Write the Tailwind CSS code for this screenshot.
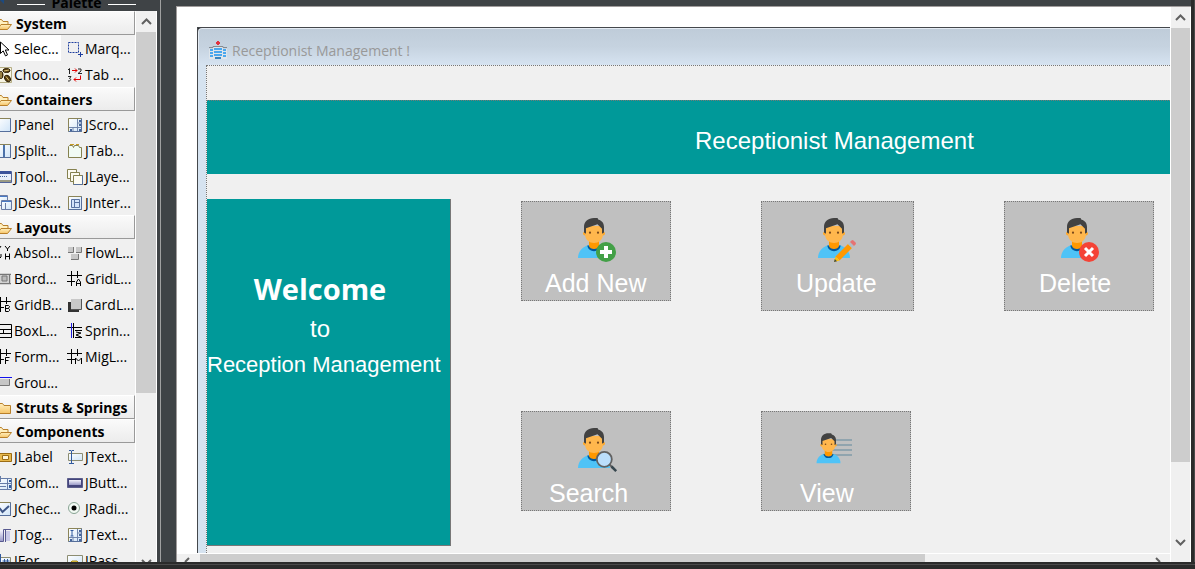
<!DOCTYPE html>
<html lang="en">
<head>
<meta charset="utf-8">
<title>Receptionist Management</title>
<script src="https://cdn.jsdelivr.net/npm/@tailwindcss/browser@4"></script>
</head>
<body class="h-screen flex flex-col overflow-hidden bg-[#2b2b2b] font-['Open_Sans',sans-serif] text-sm text-black">

<svg class="absolute h-0 w-0" aria-hidden="true">
  <defs>
    <linearGradient id="pane" x1="0" y1="0" x2="1" y2="1"><stop offset="0" stop-color="#fff"/><stop offset="1" stop-color="#cfe4f8"/></linearGradient>
    <linearGradient id="gold" x1="0" y1="0" x2="0" y2="1"><stop offset="0" stop-color="#fff0c0"/><stop offset="1" stop-color="#f6c467"/></linearGradient>
    <linearGradient id="steel" x1="0" y1="0" x2="0" y2="1"><stop offset="0" stop-color="#f4f4fc"/><stop offset="1" stop-color="#9a9ac8"/></linearGradient>
    <symbol id="open" viewBox="0 0 16 16"><path d="M1.500 13.500V3.500h4l1.500 2h5v3" fill="#fff0c0" stroke="#b9802a"/><path d="M1.500 13.500l3.500-5h10.500l-4 5z" fill="url(#gold)" stroke="#b9802a"/></symbol>
    <symbol id="closed" viewBox="0 0 16 16"><path d="M1.500 13.500v-10h5l1.500 2h6.500v8z" fill="url(#gold)" stroke="#b9802a"/></symbol>
    <symbol id="cursor" viewBox="0 0 16 16"><path d="M4.500 1v11.500l2.700-2.600 2.300 5 2-1-2.200-4.900h3.700z" fill="#fff" stroke="#000"/></symbol>
    <symbol id="marquee" viewBox="0 0 16 16"><path d="M1.500 1.500h10v10h-10z" fill="none" stroke="#1f3f9f" stroke-dasharray="2 1"/><path d="M13.500 11v5M11 13.500h5" stroke="#1f3f9f"/></symbol>
    <symbol id="beans" viewBox="0 0 16 16"><path d="M.500.500h15v15H.500z" fill="#f7f4e2" stroke="#b5ad85"/><g fill="#5c4210" stroke="#2c1d05"><ellipse cx="10.500" cy="3.500" rx="3.500" ry="2"/><ellipse cx="5" cy="8" rx="2" ry="3.500"/><ellipse cx="11.500" cy="11.500" rx="2.500" ry="3.500" transform="rotate(-35 11.500 11.500)"/></g><path d="M8 4l5-1M5 5v6M10 9.500l3 4" stroke="#d8bf77"/></symbol>
    <symbol id="order" viewBox="0 0 16 16"><path d="M1 3l1.500-1.500V7M11 2h3v2l-3 2.500h4M1 9.500h3l-1.500 2c2 0 1.500 3-1.500 2.500" fill="none" stroke="#222"/><path d="M5 3.500h5M8 1.500l2 2-2 2M13.500 8.500v4H7M9 10.500l-2 2 2 2" fill="none" stroke="#e00000"/></symbol>
    <symbol id="panel" viewBox="0 0 16 16"><path d="M1.500 1.500h13v13h-13z" fill="url(#pane)" stroke="#8b8458"/><path d="M1.500 14.500h13v-13" fill="none" stroke="#566f9b"/></symbol>
    <symbol id="scroll" viewBox="0 0 16 16"><use href="#panel"/><path d="M10.500 2v12M2 10.500h12M10.500 6h4M6 10v4" stroke="#7186ad"/><path d="M12 3h2v2h-2zM12 12h2v2h-2zM3 12h2v2H3zM12 7h2v2h-2z" fill="#45659b"/></symbol>
    <symbol id="split" viewBox="0 0 16 16"><use href="#panel"/><path d="M8 2v12" stroke="#4a71aa" stroke-width="2"/></symbol>
    <symbol id="tabs" viewBox="0 0 16 16"><path d="M1.500 14.500v-11l1-1h3l1 2 1-2h4l1 2h2v10z" fill="#f1fbf4" stroke="#85814f"/><path d="M3 1.500h4M9 1.500h3" stroke="#c69b21"/></symbol>
    <symbol id="tool" viewBox="0 0 16 16"><path d="M.500 2.500h15v11H.500z" fill="#e7edfa" stroke="#53649b"/><path d="M1 3.500h14" stroke="#3b529b" stroke-width="3"/><path d="M2 7.500h10" stroke="#45659b" stroke-dasharray="1 1"/><path d="M1 12h14" stroke="#9a9a84" stroke-width="2"/></symbol>
    <symbol id="layers" viewBox="0 0 16 16"><g fill="#fcfbf2" stroke="#85814f"><path d="M.500.500h9v9h-9z"/><path d="M3.500 3.500h9v9h-9z"/><path d="M6.500 6.500h9v9h-9z"/></g><path d="M6.500 15.500h9v-9" fill="none" stroke="#566f9b"/></symbol>
    <symbol id="desk" viewBox="0 0 16 16"><path d="M2.500.500h9v10h-9z" fill="url(#pane)" stroke="#6f7da2"/><path d="M5.500 5.500h10v9h-10z" fill="url(#pane)" stroke="#687aa3"/><path d="M3 1.500h8M6 6.500h9" stroke="#4779c5"/><path d="M9.500 8v6" stroke="#687aa3"/></symbol>
    <symbol id="inner" viewBox="0 0 16 16"><use href="#panel"/><path d="M4.500 4.500h8v8h-8zM7.500 5v7M8 7.500h4" fill="#d5e5fa" stroke="#5973a2"/></symbol>
    <symbol id="abs" viewBox="0 0 16 16"><path d="M1 1l2 3 2-3M3 4v2M9 1l2.500 3L14 1M11.500 4v2M1 9v3l2 2 2-2V9M9.500 8.500v6M13.500 8.500v6M9 11.500h5" fill="none" stroke="#000"/></symbol>
    <symbol id="flow" viewBox="0 0 16 16"><path d="M1 2h5v5H1zM9 2h5v5H9zM4 9h7v5H4z" fill="#c8c8c8"/><path d="M1 7.500h5.500V2M9 7.500h5.500V2M4 14.500h7.500V9" fill="none" stroke="#777"/></symbol>
    <symbol id="border" viewBox="0 0 16 16"><path d="M1 2h14v12H1z" fill="#d2d2d2"/><path d="M1 3.500h14M1 12.500h14M3.500 5v6M13.500 4v9M6 5h5v5H6z" fill="#bbb" stroke="#777"/></symbol>
    <symbol id="hash" viewBox="0 0 16 16"><path d="M0 4.500h15M0 10.500h8M4.500 0v15M10.500 0v7" fill="none" stroke="#000"/></symbol>
    <symbol id="grid" viewBox="0 0 16 16"><use href="#hash"/><path d="M9.500 15v-4l2-3 2 3v4M10 12.500h3" fill="none" stroke="#000"/></symbol>
    <symbol id="bag" viewBox="0 0 16 16"><use href="#hash"/><path d="M9.500 8.500h3l1 1-1 2h-3zv6h3l1-1v-1l-1-1" fill="none" stroke="#000"/></symbol>
    <symbol id="form" viewBox="0 0 16 16"><use href="#hash"/><path d="M9.500 15V8.500h4M9.500 11.500h3" fill="none" stroke="#000"/></symbol>
    <symbol id="mig" viewBox="0 0 16 16"><use href="#hash"/><path d="M8.500 15V9l3 3 3-3v6" fill="none" stroke="#000"/></symbol>
    <symbol id="card" viewBox="0 0 16 16"><path d="M1 5h3v8h8v2H1z" fill="#333"/><path d="M4 2h10v10H4z" fill="#c8c8c8"/><path d="M4 12.500h10.500V2" fill="none" stroke="#555"/></symbol>
    <symbol id="box" viewBox="0 0 16 16"><path d="M.500 1.500h15v13H.500zM1 6.500h14M1 10.500h14M7.500 7v4" fill="none" stroke="#000"/></symbol>
    <symbol id="spring" viewBox="0 0 16 16"><path d="M0 4.500h15M6.500 0v15M8 7.500h7M8 14.500h7M9 9l5 1-5 2 5 2" fill="none" stroke="#000"/><path d="M4.500 0v15" stroke="#2020e0"/></symbol>
    <symbol id="group" viewBox="0 0 16 16"><path d="M0 2.500h16" stroke="#1111ee"/><path d="M4 4h9v6H4z" fill="#c6c6c6"/><path d="M1 10.500h12.500V4" fill="none" stroke="#777"/></symbol>
    <symbol id="label" viewBox="0 0 16 16"><path d="M3.500 4.500h12v8h-12z" fill="#e7b84c" stroke="#9b6c14"/><path d="M6.500 6.500h6v4h-6z" fill="#fff6d8" stroke="#9b6c14"/><path d="M0 3l4 3" stroke="#444"/></symbol>
    <symbol id="text" viewBox="0 0 16 16"><path d="M1.500 4.500h14v7h-14z" fill="url(#pane)" stroke="#8c8d72"/><path d="M2 1.500h2l.5 1 .5-1h2M4.500 2v12M2 14.500h5" fill="none" stroke="#315a9e"/></symbol>
    <symbol id="combo" viewBox="0 0 16 16"><path d="M1.500 3.500h14v11h-14z" fill="url(#pane)" stroke="#667ca8"/><path d="M11.500 4v10M2 8.500h13M3 11.500h7M4.500 1v6" stroke="#667ca8"/><path d="M13 5h2v2h-2zM13 10h2v3h-2z" fill="#315a9e"/></symbol>
    <symbol id="button" viewBox="0 0 16 16"><path d="M.500 3.500h15v9H.500z" fill="#44457c" stroke="#5c5e8c"/><path d="M2 5h12v5H2z" fill="url(#steel)"/></symbol>
    <symbol id="check" viewBox="0 0 16 16"><use href="#panel"/><path d="M3.500 7l3 4L13 5" fill="none" stroke="#3d5586" stroke-width="2"/></symbol>
    <symbol id="radio" viewBox="0 0 16 16"><circle cx="7" cy="7" r="5.500" fill="#f2faf4" stroke="#88a393"/><circle cx="7" cy="7" r="2.500"/></symbol>
    <symbol id="toggle" viewBox="0 0 16 16"><path d="M1 3h6v11H1z" fill="url(#steel)"/><path d="M9 4h5v10H9z" fill="#c9cae7"/><path d="M0 14.500h7.500v-12H15M9.500 3v12" fill="none" stroke="#575990"/></symbol>
    <symbol id="area" viewBox="0 0 16 16"><use href="#scroll"/><path d="M3.500 3.500h3M5 4v5M3.500 9h3" stroke="#315a9e"/></symbol>
    <symbol id="formatted" viewBox="0 0 16 16"><path d="M1.500 4.500h13v9h-13z" fill="url(#pane)" stroke="#8c8d72"/><path d="M4.500 1v9M6.500 8h7M6.500 11h7M8.500 6v7M11.500 6v7" stroke="#315a9e"/></symbol>
    <symbol id="pass" viewBox="0 0 16 16"><path d="M.500 2.500h15v10H.500z" fill="url(#pane)" stroke="#8c8d72"/><path d="M1 12l4-4h5l4 4" fill="#f1d44b" stroke="#a98b19"/></symbol>
    <symbol id="person" viewBox="0 0 44 50">
      <path d="M2 43c0-7 5-11.500 11-13h10c6 1.500 11 6 11 13z" fill="#4fc3f7"/>
      <path d="M11.300 30.500c1 7.500 12.400 7.500 13.400 0z" fill="#01579b"/>
      <path d="M13 25h10v6c-1 4-9 4-10 0z" fill="#ff9800"/>
      <circle cx="9" cy="18.500" r="2" fill="#ffa726"/><circle cx="27" cy="18.500" r="2" fill="#ffa726"/>
      <path d="M9 11h18v8c0 12-18 12-18 0z" fill="#ffb74d"/>
      <path d="M8 17.500V12C8 6.500 12 3 18 3h3.500l1 1.800C26 5.500 28 8.500 28 12v5.500l-2 1.300v-5l-4.500-4.500L10 13.300v5.500z" fill="#424242"/>
      <circle cx="14" cy="17.700" r="1.100" fill="#784719"/><circle cx="22" cy="17.700" r="1.100" fill="#784719"/>
    </symbol>
  </defs>
</svg>

<div class="flex min-h-0 flex-1">
  <aside class="flex w-[157px] shrink-0 flex-col bg-[#f0f0f0]" aria-label="Palette">
    <div class="flex h-[11px] shrink-0 items-end bg-[#3f4346] font-bold">
      <svg class="h-[11px] w-[17px] shrink-0" viewBox="0 0 17 11"><path d="M0 0h4v4z" fill="#1c4a80"/></svg>
      <div class="flex flex-1 items-end gap-1.5 pr-[21px]">
        <span class="mb-1.5 h-px flex-1 bg-white"></span><span class="h-4 leading-4">Palette</span><span class="mb-1.5 h-px flex-1 bg-white"></span>
      </div>
    </div>
    <div class="flex min-h-0 flex-1">
      <div id="palette" class="w-[135px] shrink-0 overflow-hidden"></div>
      <div class="flex flex-1 flex-col items-center border-x border-white bg-[#f0f0f0]">
        <svg class="h-[21px] w-[19px] shrink-0" viewBox="0 0 19 21"><path d="M5 13l4.500-4.500L14 13" fill="none" stroke="#606060" stroke-width="2"/></svg>
        <div class="h-[361px] w-full shrink-0 bg-[#cdcdcd]"></div>
        <svg class="mt-auto h-[3px] w-[19px] shrink-0" viewBox="0 0 19 3"><path d="M5 1l4.500 4.500L14 1" fill="none" stroke="#606060" stroke-width="2"/></svg>
      </div>
    </div>
  </aside>

  <div class="w-[4px] shrink-0 border-r border-[#a0a0a0] bg-[#3f4346]"></div>
  <div class="w-[15px] shrink-0 bg-[#3f4346]"></div>

  <main class="flex min-w-0 flex-1 flex-col">
    <div class="h-[6px] shrink-0 bg-[#3f4346]"></div>
    <div class="flex min-h-0 flex-1 border-l border-t border-[#a09c9c]">
      <div class="flex min-w-0 flex-1 flex-col bg-white">
        <div class="flex min-h-0 flex-1 overflow-hidden pl-5 pt-5">
          <section class="flex min-w-0 flex-1 flex-col border-l border-t border-[#45484c] bg-[#d6e3f0]">
            <div class="shrink-0 bg-linear-to-br from-black from-0% to-[#45484c] to-1%">
            <header class="flex h-[37px] items-center gap-1 rounded-tl border-l border-t border-[#e4ebf3] bg-linear-to-b from-[#bfccd9] via-[#c6d3e0] to-[#d6e3f1] pl-[9px] pt-2 text-[#999]">
              <svg class="h-5 w-5" viewBox="0 0 20 20"><path d="M9 0h2v4H9zM8 1h4v2H8z" fill="#e0313f"/><path d="M5 6h10v12H5zM1 8h4v10H1zM15 8h4v10h-4z" fill="#dfe5ea"/><path d="M1 6.500h4v-1h10v1h4" fill="none" stroke="#858b90"/><path d="M6 7h8v2H6zM6 10h8v2H6zM6 13h8v2H6zM2 8h3v2H2zM2 11h3v2H2zM2 14h3v2H2zM15 8h3v2h-3zM15 11h3v2h-3zM15 14h3v2h-3z" fill="#4aa7ee"/><path d="M7 16h6v2H7z" fill="#3784bd"/></svg>
              <h1>Receptionist Management !</h1>
            </header>
            </div>
            <div class="ml-2 min-h-0 flex-1 border-l border-t border-dotted border-[#777] bg-[#f0f0f0]">
              <div class="mt-[34px] flex h-[74px] items-center border-t border-dotted border-[#777] bg-[#009999] pl-[488px] pt-1.5 font-['Liberation_Sans',sans-serif] text-2xl whitespace-nowrap text-white"><h2>Receptionist Management</h2></div>
              <div class="mt-[25px] flex">
                <div class="h-[347px] w-[244px] shrink-0 border-r border-b border-[#777] bg-[#009999] pt-[70px] font-['Liberation_Sans',sans-serif] text-white">
                  <div class="w-[226px] text-center whitespace-nowrap">
                    <p class="font-['Open_Sans',sans-serif] text-[29px] leading-10 font-bold">Welcome</p>
                    <p class="text-2xl leading-10">to</p>
                    <p class="text-left text-[22px] leading-8">Reception Management</p>
                  </div>
                </div>
                <div class="ml-[70px] mt-0.5 grid grid-cols-[240px_243px_150px] grid-rows-[210px_100px] items-start justify-items-start font-['Liberation_Sans',sans-serif] text-[25px] leading-9 text-white">
                  <button class="flex h-[100px] w-[150px] flex-col border border-dotted border-[#777] bg-[#c0c0c0] pt-[13px] text-left">
                    <svg class="ml-[54px] h-[50px] w-[44px] shrink-0" viewBox="0 0 44 50"><use href="#person"/><circle cx="30" cy="37" r="10" fill="#43a047"/><path d="M30 31v12M24 37h12" stroke="#fff" stroke-width="4"/></svg>
                    <span class="pl-[23px]">Add New</span>
                  </button>
                  <button class="flex h-[110px] w-[153px] flex-col border border-dotted border-[#777] bg-[#c0c0c0] pt-[13px] text-left">
                    <svg class="ml-[54px] h-[50px] w-[44px] shrink-0" viewBox="0 0 44 50"><use href="#person"/><path d="M19.500 41.500L32 29l4 4-12.500 12.500z" fill="#ff9800"/><path d="M32 29l2-2 4 4-2 2z" fill="#b0bec5"/><path d="M34 27l1.500-1.500q1-1 2 0l2 2q1 1 0 2L38 31z" fill="#e57373"/><path d="M19.500 41.500L18 47l5.500-1.500z" fill="#ffc107"/><path d="M18.800 44L18 47l3-.8z" fill="#37474f"/></svg>
                    <span class="pl-[34px]">Update</span>
                  </button>
                  <button class="flex h-[110px] w-[150px] flex-col border border-dotted border-[#777] bg-[#c0c0c0] pt-[13px] text-left">
                    <svg class="ml-[54px] h-[50px] w-[44px] shrink-0" viewBox="0 0 44 50"><use href="#person"/><circle cx="30" cy="37" r="10" fill="#f44336"/><path d="M26 33l8 8M34 33l-8 8" stroke="#fff" stroke-width="3"/></svg>
                    <span class="pl-[34px]">Delete</span>
                  </button>
                  <button class="flex h-[100px] w-[150px] flex-col border border-dotted border-[#777] bg-[#c0c0c0] pt-[13px] text-left">
                    <svg class="ml-[54px] h-[50px] w-[44px] shrink-0" viewBox="0 0 44 50"><use href="#person"/><path d="M33.500 39.500l3 3" stroke="#616161" stroke-width="2"/><path d="M35.500 41.500l4.700 4.700" stroke="#37474f" stroke-width="2.500"/><circle cx="28.300" cy="34.300" r="7.500" fill="#bbdefb" stroke="#616161" stroke-width="1.800"/></svg>
                    <span class="pl-[27px]">Search</span>
                  </button>
                  <button class="flex h-[100px] w-[150px] flex-col border border-dotted border-[#777] bg-[#c0c0c0] pt-[13px] text-left">
                    <svg class="ml-[54px] h-[50px] w-[44px] shrink-0" viewBox="0 0 44 50"><path d="M18 15h18M18 20h18M16 25h20M16 30h20" stroke="#90a4ae" stroke-width="2"/><use href="#person" x="-1" y="6" width="33" height="37.500"/></svg>
                    <span class="pl-[38px]">View</span>
                  </button>
                </div>
              </div>
            </div>
          </section>
        </div>
        <div class="flex h-[9px] shrink-0 border-t border-white bg-[#f0f0f0]">
          <svg class="h-2 w-[23px] shrink-0" viewBox="0 0 23 8"><path d="M12 4L8 8" stroke="#606060" stroke-width="2"/></svg>
          <div class="w-[725px] bg-[#cdcdcd]"></div>
          <svg class="ml-auto h-2 w-[19px] shrink-0" viewBox="0 0 19 8"><path d="M5 4l4 4" stroke="#606060" stroke-width="2"/></svg>
        </div>
      </div>
      <div class="flex w-[21px] shrink-0 flex-col border-x border-white bg-[#f0f0f0]">
        <svg class="h-[21px] w-[19px] shrink-0" viewBox="0 0 19 21"><path d="M5 13l4.500-4.500L14 13" fill="none" stroke="#606060" stroke-width="2"/></svg>
        <div class="h-[434px] shrink-0 bg-[#cdcdcd]"></div>
        <svg class="mt-auto mb-2 h-[21px] w-[19px] shrink-0" viewBox="0 0 19 21"><path d="M5 7l4.500 4.500L14 7" fill="none" stroke="#606060" stroke-width="2"/></svg>
      </div>
    </div>
  </main>
  <div class="w-[4px] shrink-0 border-r border-[#4a4a4a] bg-[#2b2b2b]"></div>
</div>
<footer class="h-[7px] shrink-0 pt-0.5"><div class="h-px bg-[#4a4a4a]"></div></footer>

<script>
const groups = [
  ["System", "open", [["cursor","Selec..."],["marquee","Marq..."],["beans","Choo..."],["order","Tab ..."]]],
  ["Containers", "open", [["panel","JPanel"],["scroll","JScro..."],["split","JSplit..."],["tabs","JTab..."],["tool","JTool..."],["layers","JLaye..."],["desk","JDesk..."],["inner","JInter..."]]],
  ["Layouts", "open", [["abs","Absol..."],["flow","FlowL..."],["border","Bord..."],["grid","GridL..."],["bag","GridB..."],["card","CardL..."],["box","BoxL..."],["spring","Sprin..."],["form","Form..."],["mig","MigL..."],["group","Grou..."]]],
  ["Struts & Springs", "closed", []],
  ["Components", "open", [["label","JLabel"],["text","JText..."],["combo","JCom..."],["button","JButt..."],["check","JChec..."],["radio","JRadi..."],["toggle","JTog..."],["area","JText..."],["formatted","JFor..."],["pass","JPass..."]]],
];
const icon = id => `<svg class="h-4 w-4 shrink-0" viewBox="0 0 16 16"><use href="#${id}"/></svg>`;
document.getElementById("palette").innerHTML = groups.map(([name, folder, items]) => `
  <button class="flex h-6 w-full items-center gap-1 border-t border-r border-b border-t-white border-r-[#999] border-b-[#999] bg-linear-to-b from-[#fafafa] to-[#ececec] pt-0.5 font-bold whitespace-nowrap"><span class="-ml-1 flex">${icon(folder)}</span>${name.replace("&", "&amp;")}</button>
  <div class="-ml-1 grid grid-cols-[71px_68px]">${items.map(([id, text]) => `
    <button class="flex h-[26px] items-center pt-0.5 whitespace-nowrap ${id === "cursor" ? "mr-1.5 bg-white" : ""}">${icon(id)}<span class="pl-0.5">${text}</span></button>`).join("")}</div>`).join("");
</script>
</body>
</html>
